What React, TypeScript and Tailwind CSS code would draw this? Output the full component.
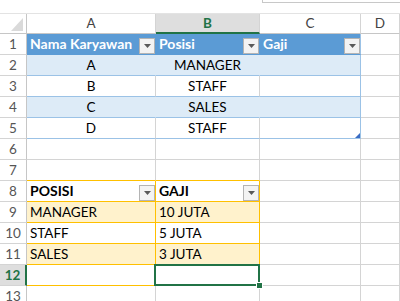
import clsx from 'clsx';

const COLS = ['A', 'B', 'C', 'D'];
const ROWS = [1, 2, 3, 4, 5, 6, 7, 8, 9, 10, 11, 12, 13];

// cell texts, by row then column (A..D)
const DATA: Record<number, string[]> = {
  1: ['Nama Karyawan', 'Posisi', 'Gaji'],
  2: ['A', 'MANAGER'],
  3: ['B', 'STAFF'],
  4: ['C', 'SALES'],
  5: ['D', 'STAFF'],
  8: ['POSISI', 'GAJI'],
  9: ['MANAGER', '10 JUTA'],
  10: ['STAFF', '5 JUTA'],
  11: ['SALES', '3 JUTA'],
};

const SEL_ROW = 12;
const SEL_COL = 1;

function FilterButton() {
  return (
    <span className="ml-auto flex h-[16px] w-[16px] shrink-0 items-center justify-center border border-[#b4b4b4] bg-[#f3f3f3]">
      <svg width="7" height="4" viewBox="0 0 7 4">
        <path d="M0 0h7L3.5 4z" fill="#5a5a5a" />
      </svg>
    </span>
  );
}

function cellTone(r: number, c: number) {
  const inTable1 = r <= 5 && c <= 2;
  const inTable2 = r >= 8 && r <= 12 && c <= 1;

  if (inTable1) {
    if (r === 1) {
      return clsx(
        'bg-[#5b9bd5] text-white font-bold text-[14px] border-b-[#5b9bd5]',
        c < 2 ? 'border-r-[#5b9bd5]' : 'border-r-[#9bc2e6]'
      );
    }
    if (r % 2 === 0) {
      return clsx('bg-[#ddebf7] border-b-[#9bc2e6]', c < 2 ? 'border-r-[#ddebf7]' : 'border-r-[#9bc2e6]');
    }
    return clsx('bg-white border-b-[#9bc2e6]', c < 2 ? 'border-r-[#d4d4d4]' : 'border-r-[#9bc2e6]');
  }
  if (inTable2) {
    return clsx(
      'border-r-[#ffc000] border-b-[#ffc000]',
      r === 9 || r === 11 ? 'bg-[#fff2cc]' : 'bg-white',
      r === 8 && 'font-bold text-[14px]'
    );
  }
  if (r === 7 && c <= 1) return 'bg-white border-r-[#d4d4d4] border-b-[#ffc000]';
  return 'bg-white border-r-[#d4d4d4] border-b-[#d4d4d4]';
}

function Cell({ r, c }: { r: number; c: number }) {
  const text = DATA[r]?.[c] ?? '';
  const centered = r >= 2 && r <= 5 && c <= 1;
  const hasFilter = (r === 1 && c <= 2) || (r === 8 && c <= 1);
  const selected = r === SEL_ROW && c === SEL_COL;

  return (
    <div
      className={clsx(
        'relative flex h-[21px] items-end border-r border-b text-[13.5px] leading-none',
        centered ? 'justify-center' : 'pl-[3px]',
        cellTone(r, c)
      )}
    >
      {text && <span className="whitespace-nowrap pb-[3px]">{text}</span>}
      {hasFilter && <FilterButton />}

      {r === 5 && c === 2 && (
        <svg className="absolute right-0 bottom-0" width="5" height="5" viewBox="0 0 5 5">
          <path d="M5 0v5H0z" fill="#3a6cc4" />
        </svg>
      )}

      {selected && (
        <>
          <div className="absolute -top-[1px] -right-[1px] -bottom-[1px] -left-[2px] z-10 border-2 border-[#217346]" />
          <div className="absolute -right-[4px] -bottom-[4px] z-20 h-[7px] w-[7px] border border-white bg-[#217346]" />
        </>
      )}
    </div>
  );
}

export default function App() {
  return (
    <div className="h-[301px] w-[400px] overflow-hidden bg-white font-[Lato,sans-serif] text-black select-none">
      {/* strip under the formula bar */}
      <div className="flex h-[14px] border-b border-[#e3e3e3]">
        <div className="ml-[262px] h-[3px] flex-1 border-b border-l border-[#c8c8c8]" />
      </div>

      <div className="grid grid-cols-[27px_129px_104px_101px_1fr]">
        {/* select-all corner */}
        <div className="flex h-[20px] items-end justify-end border-r border-b border-r-[#c6c6c6] border-b-[#c6c6c6] pr-[3px] pb-[2px]">
          <svg width="12" height="13" viewBox="0 0 12 13">
            <path d="M12 0v13H0z" fill="#dadada" />
          </svg>
        </div>
        {COLS.map((col, i) => (
          <div
            key={col}
            className={clsx(
              'flex h-[20px] items-center justify-center border-r border-r-[#d4d4d4] text-[13.5px]',
              i === SEL_COL
                ? 'border-b-2 border-b-[#217346] bg-[#dedede] font-bold text-[#217346]'
                : 'border-b border-b-[#c6c6c6] text-[#444]'
            )}
          >
            {col}
          </div>
        ))}

        {ROWS.map((r) => (
          <div key={r} className="contents">
            <div
              className={clsx(
                'flex h-[21px] items-end justify-center border-b border-b-[#d4d4d4] pb-[3px] text-[13.5px] leading-none',
                r === SEL_ROW
                  ? 'border-r-2 border-r-[#217346] bg-[#dedede] font-bold text-[#217346]'
                  : 'border-r border-r-[#c6c6c6] text-[#555]'
              )}
            >
              {r}
            </div>
            {COLS.map((_, c) => (
              <Cell key={c} r={r} c={c} />
            ))}
          </div>
        ))}
      </div>
    </div>
  );
}
